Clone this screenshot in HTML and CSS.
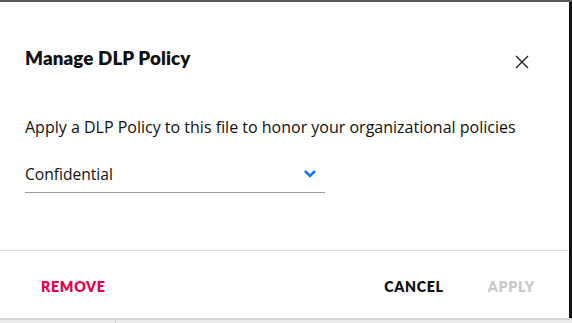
FILE: index.html
```html
<!DOCTYPE html>
<html lang="en">
<head>
    <meta charset="UTF-8">
    <meta name="viewport" content="width=device-width, initial-scale=1.0">
    <title>Manage DLP Policy</title>
    <link rel="stylesheet" href="styles.css">
</head>
<body>

    <div class="screen">
        <div class="dialog">
            <div class="dialog-header">
                <h2>Manage DLP Policy</h2>
                <button class="close-btn" aria-label="Close">
                    <svg width="14" height="14" viewBox="0 0 14 14">
                        <path d="M1 1 L13 13 M13 1 L1 13" stroke="#222" stroke-width="1.4" fill="none"/>
                    </svg>
                </button>
            </div>

            <div class="dialog-body">
                <p class="intro">Apply a DLP Policy to this file to honor your organizational policies</p>
                <div class="select">
                    <span>Confidential</span>
                    <svg width="14" height="9" viewBox="0 0 14 9">
                        <path d="M2 2 L7 7 L12 2" stroke="#1b74e4" stroke-width="2.6" fill="none"/>
                    </svg>
                </div>
            </div>

            <div class="dialog-footer">
                <button class="btn btn-remove">REMOVE</button>
                <div class="footer-right">
                    <button class="btn btn-cancel">CANCEL</button>
                    <button class="btn btn-apply" disabled>APPLY</button>
                </div>
            </div>
        </div>
        <div class="edge"></div>
    </div>

    <div class="below">
        <div class="below-cell"></div>
    </div>

</body>
</html>
```

FILE: styles.css
```css
/* General styling */
body {
    font-family: 'Lato', 'Noto Sans', sans-serif;
    margin: 0;
    padding: 0;
    width: 572px;
    height: 323px;
    overflow: hidden;
    background: #ececec;
    color: #111;
}

.screen {
    display: flex;
    height: 316px;
    border-top: 2px solid #5a5a5a;
}

.dialog {
    flex: 1;
    background: #fff;
    display: flex;
    flex-direction: column;
}

.edge {
    width: 3px;
    background: #111;
}

.dialog-header {
    display: flex;
    justify-content: space-between;
    align-items: center;
    padding: 42px 40px 0 25px;
    height: 26px;
}

.dialog-header h2 {
    margin: 0;
    font-size: 18.8px;
    font-weight: 800;
    letter-spacing: 0.1px;
}

.close-btn {
    border: none;
    background: none;
    padding: 0;
    margin-top: 10px;
    display: flex;
}

.dialog-body {
    padding: 0 25px;
    height: 180px;
}

.intro {
    margin: 46px 0 0;
    font-family: 'Open Sans', sans-serif;
    font-size: 16px;
    line-height: 22px;
}

.select {
    width: 300px;
    margin-top: 21px;
    height: 34px;
    box-sizing: border-box;
    display: flex;
    justify-content: space-between;
    align-items: center;
    border-bottom: 1px solid #9a9a9a;
    font-family: 'Open Sans', sans-serif;
    font-size: 15.6px;
    padding-bottom: 4px;
}

.select svg {
    margin-right: 8px;
}

.dialog-footer {
    flex: 1;
    border-top: 1px solid #ddd;
    display: flex;
    justify-content: space-between;
    align-items: center;
    padding: 4px 34px 0 41px;
}

.footer-right {
    display: flex;
    gap: 44px;
}

.btn {
    border: none;
    background: none;
    padding: 0;
    font-family: inherit;
    font-size: 14.2px;
    font-weight: 800;
    letter-spacing: 0.7px;
}

.btn-remove {
    color: #e5004c;
}

.btn-cancel {
    color: #111;
}

.btn-apply {
    color: #c8c8c8;
}

.below {
    display: flex;
    border-top: 2px solid #d6d6d6;
    height: 5px;
}

.below-cell {
    width: 115px;
    border-right: 1px solid #cfcfcf;
}
```
